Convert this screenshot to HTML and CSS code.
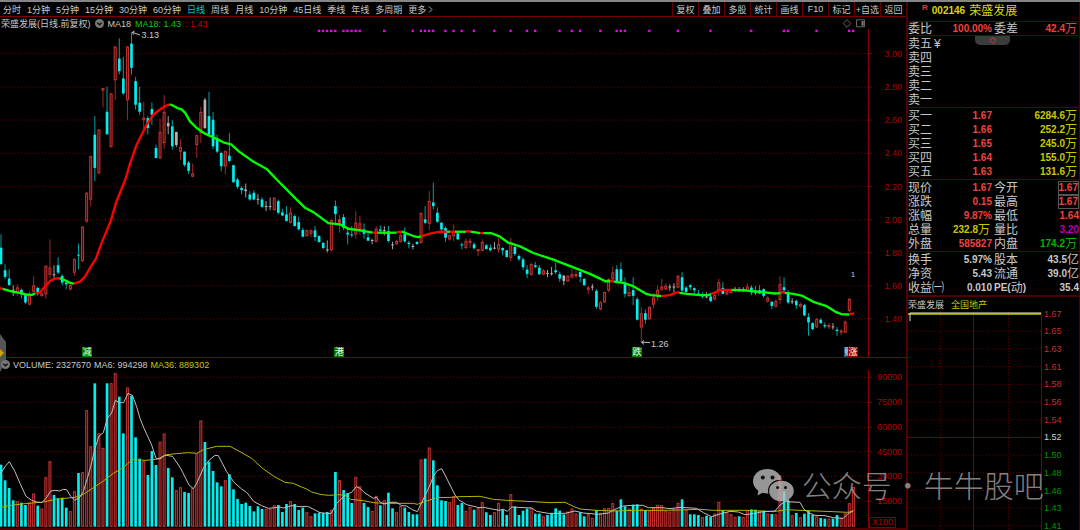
FILE: index.html
```html
<!DOCTYPE html>
<html lang="zh-CN">
<head>
<meta charset="utf-8">
<title>荣盛发展 002146</title>
<link rel="stylesheet" href="styles.css">
</head>
<body>
<div class="app">
  <main class="charts">
    <header class="toolbar">
      <nav class="periods">
        <button>分时</button><button>1分钟</button><button>5分钟</button><button>15分钟</button><button>30分钟</button><button>60分钟</button><button class="active">日线</button><button>周线</button><button>月线</button><button>10分钟</button><button>45日线</button><button>季线</button><button>年线</button><button>多周期</button><button class="more">更多
          <svg width="5" height="7" viewBox="0 0 5 7"><path d="M1 .5 4 3.5 1 6.5"/></svg></button>
      </nav>
      <div class="tools">
        <button>复权</button><button>叠加</button><button>多股</button><button>统计</button><button>画线</button><button>F10</button><button>标记</button><button>+自选</button><button>返回</button>
      </div>
    </header>

    <section class="pane price">
      <div class="caption">
        <span>荣盛发展(日线.前复权)</span>
        <svg class="toggle" width="9" height="9" viewBox="0 0 9 9"><circle cx="4.500" cy="4.500" r="4.500"/><path d="M2.300 3.700 4.500 5.700 6.700 3.700"/></svg>
        <span>MA18</span><span class="green">MA18: 1.43</span><span class="red">: 1.43</span>
        <svg class="corner" width="24" height="9" viewBox="0 0 24 9"><path d="M5 .7 8.800 4.500 5 8.300 1.200 4.500Z"/><path d="M14.500.8h8v7h-8z"/><path class="fill" d="M19.500 2h2.200v4.800h-2.200z"/></svg>
      </div>
      <div class="body">
        <div class="plot">
          <svg id="price" viewBox="0 -453 2604 987" preserveAspectRatio="none"></svg>
          <span class="note high">3.13</span>
          <span class="note low">1.26</span>
          <span class="note one">1</span>
          <span class="badge b1">减</span>
          <span class="badge b2">港</span>
          <span class="badge b3">跌</span>
          <span class="badge blue">财</span>
          <span class="badge crimson">涨</span>
        </div>
        <div class="axis"><svg id="price-axis"></svg></div>
      </div>
    </section>

    <section class="pane volume">
      <div class="caption">
        <svg class="toggle" width="9" height="9" viewBox="0 0 9 9"><circle cx="4.500" cy="4.500" r="4.500"/><path d="M2.300 3.700 4.500 5.700 6.700 3.700"/></svg>
        <span>VOLUME: 2327670</span><span>MA6: 994298</span><span class="yellow">MA36: 889302</span>
      </div>
      <div class="body">
        <div class="plot"><svg id="volume" viewBox="0 45 2604 474" preserveAspectRatio="none"></svg></div>
        <div class="axis"><svg id="volume-axis"></svg><span class="unit">X100</span></div>
      </div>
      <svg class="handle" width="7" height="38" viewBox="0 0 7 38"><path d="M0 0 6 8V28L0 38Z"/><path class="gem" d="M0 15 4 19 0 23Z"/></svg>
    </section>
  </main>

  <aside class="quote">
    <h1 class="name"><sup>R</sup><b>002146</b><span>荣盛发展</span></h1>
    <table class="group first">
      <tr class="pair"><th>委比</th><td class="up"><b>100.00%</b></td><th>委差</th><td class="up inset"><b>42.4</b>万</td></tr>
    </table>
    <table class="group sell">
      <tr><th>卖五<i>¥</i></th></tr><tr><th>卖四</th></tr><tr><th>卖三</th></tr><tr><th>卖二</th></tr><tr><th>卖一</th></tr>
    </table>
    <table class="group">
      <tr class="book"><th>买一</th><td class="up"><b>1.67</b></td><td class="amount"><b>6284.6</b>万</td></tr>
      <tr class="book"><th>买二</th><td class="up"><b>1.66</b></td><td class="amount"><b>252.2</b>万</td></tr>
      <tr class="book"><th>买三</th><td class="up"><b>1.65</b></td><td class="amount"><b>245.0</b>万</td></tr>
      <tr class="book"><th>买四</th><td class="up"><b>1.64</b></td><td class="amount"><b>155.0</b>万</td></tr>
      <tr class="book"><th>买五</th><td class="up"><b>1.63</b></td><td class="amount"><b>131.6</b>万</td></tr>
    </table>
    <table class="group">
      <tr class="pair"><th>现价</th><td class="up"><b>1.67</b></td><th>今开</th><td class="up"><b class="boxed">1.67</b></td></tr>
      <tr class="pair"><th>涨跌</th><td class="up"><b>0.15</b></td><th>最高</th><td class="up"><b class="boxed">1.67</b></td></tr>
      <tr class="pair"><th>涨幅</th><td class="up"><b>9.87%</b></td><th>最低</th><td class="up"><b>1.64</b></td></tr>
      <tr class="pair"><th>总量</th><td class="gold inset"><b>232.8</b>万</td><th>量比</th><td class="magenta"><b>3.20</b></td></tr>
      <tr class="pair"><th>外盘</th><td class="up"><b>585827</b></td><th>内盘</th><td class="down inset"><b>174.2</b>万</td></tr>
    </table>
    <table class="group last">
      <tr class="pair"><th>换手</th><td><b>5.97%</b></td><th>股本</th><td><b>43.5</b>亿</td></tr>
      <tr class="pair"><th>净资</th><td><b>5.43</b></td><th>流通</th><td><b>39.0</b>亿</td></tr>
      <tr class="pair"><th>收益㈠</th><td><b>0.010</b></td><th><b>PE(</b>动<b>)</b></th><td><b>35.4</b></td></tr>
    </table>
    <div class="tabs"><button>荣盛发展</button><button class="gold">全国地产</button></div>
    <div class="mini">
      <svg id="mini" viewBox="0 0 134 218" preserveAspectRatio="none"></svg>
      <svg id="mini-axis"></svg>
    </div>
    <button class="expand" aria-label="展开"><svg width="8" height="7" viewBox="0 0 8 7"><path d="M1 3 4 .8 7 3 M1 3.800 4 6.300 7 3.800"/></svg></button>
  </aside>

  <div class="watermark">
    <svg width="42" height="34" viewBox="0 0 42 34">
      <path d="M14.500 0C6.300 0 0 5.400 0 12.300c0 3.900 2 7.200 5.300 9.500L4.600 26.500l5-2.700c1.600.5 3.200.7 4.900.7h1A10.800 10.800 0 0 1 15 21.600C15 15.400 20.500 10.800 27.500 10.700h1.100C27.300 4.500 21.500 0 14.500 0Z"/>
      <path d="M28.500 11.800c-7 0-12.400 4.300-12.400 10.100s5.400 10.400 12.400 10.400c1.300 0 2.600-.2 3.800-.5l4.500 2.200-.8-4c3-1.900 4.800-4.800 4.800-8.100 0-5.800-5.300-10.100-12.300-10.100Z"/>
      <g class="eyes"><circle cx="9.800" cy="8.500" r="2"/><circle cx="19.500" cy="8.500" r="2"/><circle cx="24.600" cy="18.500" r="1.500"/><circle cx="32.500" cy="18.500" r="1.500"/></g>
    </svg>
    <span>公众号</span><span class="dot">·</span><span>牛牛股吧</span>
  </div>
</div>
<script src="chart.js"></script>
</body>
</html>
```

FILE: styles.css
```css
* { box-sizing: border-box; }
body { margin: 0; background: #000; color: #c8c8c8; font-family: "Liberation Sans", "Noto Sans CJK SC", sans-serif; font-size: 9px; }
button { appearance: none; margin: 0; padding: 0; border: 0; background: none; color: inherit; font: inherit; white-space: nowrap; cursor: pointer; }
svg { display: block; }

.app { position: relative; display: flex; height: 100vh; overflow: hidden; border-top: 2px solid #858585; }
.charts { flex: 1; min-width: 0; display: flex; flex-direction: column; }

.toolbar { display: flex; justify-content: space-between; height: 15px; border-bottom: 1px solid #780000; }
.periods { display: flex; align-items: center; gap: 6px; padding-left: 3px; }
.periods .active { color: #00c8c8; }
.more { display: flex; align-items: center; gap: 2px; }
.more path { fill: none; stroke: #b0b0b0; }
.tools { display: flex; }
.tools button { width: 26px; border-left: 1px solid #640000; text-align: center; }

.pane { position: relative; display: flex; flex-direction: column; min-height: 0; }
.price { flex: 342 1 0; border-bottom: 1px solid #780000; }
.volume { flex: 171 1 0; border-bottom: 2px solid #500000; }
.caption { display: flex; align-items: center; gap: 4px; height: 12px; flex: none; padding: 1px 0 0 1px; line-height: 12px; white-space: nowrap; }
.volume .caption { position: relative; z-index: 1; gap: 3px; }
.toggle circle { fill: #777; }
.toggle path { fill: none; stroke: #111; stroke-width: 1.500px; }
.green { color: #00d000; }
.red { color: #c80000; }
.yellow { color: #c8c800; }
.corner { margin-left: auto; margin-right: 40px; }
.corner path { fill: none; stroke: #666; }
.corner .fill { fill: #777; stroke: none; }

.body { flex: 1; min-height: 0; display: flex; }
.plot { position: relative; flex: 1; min-width: 0; }
.plot svg { position: absolute; width: 100%; height: 100%; }
.axis { position: relative; width: 38px; border-left: 1px solid #8c0000; }
.axis svg { position: absolute; width: 100%; height: 100%; }
.axis text { fill: #b40000; font-size: 9px; text-anchor: end; }
.axis line { stroke: #780000; }
.unit { position: absolute; left: 0; bottom: 0; height: 11px; padding: 0 2px; border: 1px solid #780000; color: #b40000; line-height: 9px; }
.handle { position: absolute; left: 0; top: -24px; }
.handle path { fill: #555; }
.handle .gem { fill: #e09a00; }

.note { position: absolute; line-height: 10px; }
.high { left: 16.300%; top: 1px; }
.low { left: 75%; top: 94.400%; }
.one { left: 98%; top: 73.600%; font-size: 8px; }
.badge { position: absolute; bottom: 0; width: 10px; height: 10px; background: #007800; color: #e8ffe8; line-height: 10px; text-align: center; overflow: hidden; }
.b1 { left: 9.450%; }
.b2 { left: 38.500%; }
.b3 { left: 72.800%; }
.blue { left: 97.200%; background: #1a4c80; }
.crimson { left: 97.700%; background: #8c0000; color: #fff; }

.grid { stroke: #6a0000; stroke-width: 3px; stroke-dasharray: 3 6; }
.up-mark { stroke: #c83232; fill: #3c0a0a; stroke-width: 3px; }
.up-wick { stroke: #a02828; stroke-width: 3px; }
.down-mark { fill: #00f0f0; }
.down-wick { stroke: #00a0a0; stroke-width: 3px; }
.flat-mark { fill: #b4b4b4; }
.flat-wick { stroke: #a0a0a0; stroke-width: 3px; }
.signal { fill: #f000f0; }
.line { fill: none; stroke-width: 3px; stroke-linejoin: round; }
.trend { stroke-width: 7px; }
.rise { stroke: #f00; }
.fall { stroke: #0f0; }
.white { stroke: #bebebe; }
.gold-line { stroke: #b4b400; }

.quote { position: relative; width: 174px; flex: none; display: flex; flex-direction: column; border-left: 2px solid #500000; border-right: 1px solid #500000; font-size: 12px; }
.name { display: flex; align-items: center; gap: 4px; height: 20px; margin: 0; padding: 0 0 2px 14px; border-bottom: 1px solid #500000; color: #d8d800; font-size: 12px; font-weight: 400; line-height: 16px; }
.name b, .quote td b, .quote th b { font-size: 10px; }
.name sup { color: #e04040; font-size: 8px; font-weight: 700; line-height: 8px; align-self: flex-start; padding-top: 2px; }
.group { display: block; padding: 1px 0 0; border-bottom: 1px solid #500000; border-spacing: 0; }
.group tbody { display: block; }
.first { padding: 0; height: 14px; }
.last { border-bottom-width: 2px; }
.group tr { display: grid; height: 14px; align-items: center; line-height: 14px; white-space: nowrap; grid-template-columns: 1fr; }
.group .pair { grid-template-columns: 24px 60px 24px 1fr; }
.group .book { grid-template-columns: 24px 60px 1fr; }
.group th, .group td { display: flex; align-items: center; padding: 0; height: 14px; font-weight: 400; }
.group .pair th:nth-child(3) { padding-left: 2px; }
.group td { justify-content: flex-end; }
.group th i { margin-left: 2px; font-style: normal; }
.group td.inset, .group td.amount { padding-right: 2px; }
.quote .up { color: #f04040; }
.quote .amount, .quote .gold { color: #c8c800; }
.quote .magenta { color: #b400b4; }
.quote .down { color: #00b400; }
.boxed { border: 1px solid #555; line-height: 12px; }
.tabs { display: flex; align-items: center; gap: 7px; height: 15px; font-size: 9px; }
.expand { position: absolute; top: 34px; left: 67px; width: 35px; height: 9px; display: flex; justify-content: center; align-items: center; background: #3c3c3c; border-radius: 0 0 5px 5px; }
.expand path { fill: none; stroke: #e03030; }

.mini { flex: 1; min-height: 0; display: flex; }
#mini { flex: 1; min-width: 0; height: 100%; }
#mini-axis { width: 37px; height: 100%; overflow: visible; }
#mini line { stroke: #780000; }
#mini .dotted { stroke: #640000; stroke-dasharray: 1 2; }
#mini .price-line { stroke: #e0e0e0; }
#mini .average-line { stroke: #909000; stroke-width: 2px; }
#mini-axis text { font-size: 9px; fill: #c03030; }
#mini-axis .even { fill: #d0d0d0; }
#mini-axis .under { fill: #009600; }

.watermark { position: absolute; left: 69.700%; top: 467px; display: flex; align-items: flex-start; color: #a0a0a0; opacity: .8; font-family: "Noto Sans CJK SC", sans-serif; font-size: 30px; font-weight: 300; line-height: 30px; white-space: nowrap; pointer-events: none; }
.watermark svg { margin-right: 7px; fill: #bcbcbc; }
.watermark .eyes { fill: #111; }
.watermark .dot { width: 32px; text-align: center; }
```

FILE: chart.js
```js
// Bars are evenly spaced; a plot unit is a third of a pixel at the default width.
const barX = i => 3 + i * 12.235;

// One entry per day: colour, high, body top, body bottom, low.
const candles = `c 165 205 255 255|c 255 273 293 300|c 270 298 318 318|w 318 332 334 350|r 315 325 340 350|c 328 332 346 358|c 345 348 370 375|r 337 350 376 378|r 291 319 338 340|c 323 326 343 350
r 330 343 350 353|r 258 260 345 358|r 180 265 286 298|w 258 285 287 297|c 234 258 280 285|c 285 290 310 318|c 305 310 315 330|r 315 318 330 334|r 237 240 280 290|c 193 226 229 270
r 140 142 245 248|r 38 40 126 130|r -72 -70 60 80|c -191 -135 -35 5|r -152 -150 -19 -17|r -275 -275 -268 -217|c -279 -204 -136 -136|r -260 -259 -98 -97|r -401 -400 -299 -240|c -425 -364 -326 -316
c -369 -304 -259 -255|r -402 -400 -239 -180|c -443 -409 -336 -316|c -309 -296 -225 -211|c -280 -231 -204 -195|r -234 -186 -179 -142|c -191 -185 -155 -136|c -232 -212 -195 -165|c -105 -95 -65 -63|r -182 -143 -64 -61
r -254 -203 -110 -92|w -191 -170 -160 -136|c -179 -160 -100 -90|w -144 -143 -104 -98|r -122 -98 -84 -60|c -84 -84 -44 -39|c -56 -51 -26 -16|r -48 -18 -9 -7|r -135 -133 -104 -65|r -219 -203 -140 -110
w -245 -240 -155 -152|c -264 -191 -136 -130|c -204 -180 -100 -91|c -135 -125 -84 -80|c -84 -80 -40 -25|r -88 -85 -40 -16|c -140 -72 -56 -52|c -45 -43 8 10|c -5 0 22 28|c 20 25 32 45
w 12 30 35 54|c 35 45 60 64|c 32 40 60 62|w 44 58 60 75|c 53 60 82 85|w 65 80 82 95|w 54 80 82 92|r 54 55 92 93|c 60 65 100 105|c 88 99 108 110
c 80 105 125 126|r 83 100 130 132|c 105 110 140 141|c 112 128 150 153|c 145 152 172 174|r 150 153 170 171|r 150 153 163 173|c 140 153 173 185|c 168 170 188 190|c 188 191 206 210
w 183 210 212 219|r 120 122 212 217|c 63 80 104 130|r 107 120 130 160|c 104 113 145 152|c 145 160 165 195|c 140 165 168 174|r 95 130 165 178|r 110 132 150 166|c 132 150 163 178
c 160 174 184 185|w 178 182 184 195|r 141 148 187 189|c 138 150 154 160|w 140 152 155 168|c 140 155 185 189|w 187 195 197 210|r 182 185 194 197|r 158 168 187 189|c 144 165 186 190
c 184 190 194 207|w 193 200 202 210|c 185 188 194 197|r 98 101 190 194|c 80 120 130 135|r 35 65 133 152|c 9 69 80 90|c 84 100 127 130|c 128 130 150 155|c 141 146 175 187
r 165 168 180 184|r 135 156 170 186|c 158 162 180 182|c 190 195 198 210|r 177 185 206 208|r 177 185 190 206|c 189 195 207 210|r 208 210 215 230|r 180 188 214 216|c 194 198 209 210
c 195 205 213 216|w 188 205 207 210|r 176 195 210 220|c 204 206 213 228|c 212 213 233 235|r 176 190 235 246|c 197 203 224 230|c 225 230 240 244|c 234 240 264 272|c 258 271 284 297
r 250 255 286 290|c 248 258 263 268|c 257 265 285 287|r 270 274 286 288|w 272 281 283 294|w 263 282 284 289|c 250 273 279 285|c 277 285 298 308|w 288 289 305 318|r 288 290 306 308
r 268 285 294 298|r 272 285 287 297|c 277 278 293 308|c 297 299 318 319|r 320 325 331 345|w 314 322 324 334|c 330 335 383 389|r 366 370 390 394|r 337 339 369 371|r 297 300 334 339
r 261 280 300 308|c 258 270 311 312|c 249 270 306 310|c 294 310 344 355|r 318 339 350 354|c 294 333 350 378|c 354 360 422 424|r 385 403 445 490|c 390 402 422 434|r 381 384 420 423
r 342 355 376 388|r 318 332 352 365|r 299 323 331 334|r 312 320 330 333|w 315 322 324 335|w 312 322 324 340|r 288 290 325 328|c 279 294 334 340|c 321 325 338 341|c 315 318 324 333
c 324 327 333 345|c 332 343 346 350|c 339 345 352 358|w 339 352 354 357|c 340 352 366 369|r 344 348 360 364|r 299 309 332 350|c 309 326 344 346|r 333 337 345 348|r 329 334 341 343
w 324 331 333 338|w 324 330 332 338|w 324 330 332 338|r 312 322 334 337|c 318 325 340 348|c 320 334 342 348|c 318 333 343 345|c 327 330 350 356|r 351 356 367 370|c 365 368 380 390
r 360 366 382 385|r 291 315 362 374|c 294 324 333 345|c 333 339 370 374|w 357 366 368 375|c 362 365 378 390|r 370 375 382 386|c 375 378 409 411|c 402 414 430 470|c 429 432 450 453
r 416 420 444 447|c 417 422 432 434|c 430 438 442 448|r 432 438 444 450|w 432 442 444 452|c 444 452 456 470|r 450 455 460 468|r 424 428 460 462|r 356 360 395 399`;

const volumes = `c329 c376 c399 c436 r439 c443 c450 r443 r416 c452 r461 r367 r319 c420 c430 c428 c458 r469 r409 c354 r352 r166 r274 c85 r235 r279 c85 r85 r55 c125
c235 r98 c122 c247 c311 r319 c360 c288 c330 r261 r236 c339 c367 r406 r397 c411 c414 r400 r295 r197 c261 c320 c348 c382 c394 r376 c358 c403 c432 c447
c443 c453 c469 c454 c462 r462 r462 r451 c450 c471 c447 r439 c447 c465 c458 r472 r484 c475 c473 c474 c471 r465 c351 r376 c405 c415 c444 r367 r394 c444
c456 r468 r423 c451 r436 c413 c460 r472 r453 c458 c471 c478 c478 r314 c311 r278 c316 c391 c436 c438 r442 r424 c450 c444 r468 r456 c464 r460 r442 c472
c480 r472 r444 c464 c480 r418 c454 c480 c467 c461 r459 c476 c476 r484 c480 c475 c460 c467 c478 r470 r461 r476 c472 c484 r478 r489 c465 r474 r460 r459
r445 c466 c433 c454 r461 c449 c448 r461 c465 r466 r458 r450 r451 r467 r470 r462 r444 c433 r465 c478 c478 c480 r487 c482 c485 r476 r441 c466 r472 r478
r486 c484 r486 r466 c463 c464 r468 c467 r476 c477 r478 r361 c409 c438 r481 c474 r487 c476 c467 c480 r484 c489 c491 r491 c491 c480 r489 r475 r445 r396`;

// MA18, split wherever its slope changes sign.
const trend = [
  ['rise', '0,327 8,329'],
  ['fall', '8,329 40,338 60,341 78,346 95,347 105,343'],
  ['rise', '105,343 120,340 135,322 152,304 165,298 178,297'],
  ['fall', '178,297 195,303 210,311 222,313'],
  ['rise', '222,313 240,307 255,292 270,266 288,238 305,190 332,125 348,70 376,0 390,-48 410,-105 440,-165 460,-195 480,-211 495,-221 510,-226'],
  ['fall', '510,-226 520,-222 532,-215 545,-211 556,-200 570,-175 590,-155 615,-138 640,-127 670,-112 693,-106 720,-82 760,-54 800,-32 830,0 900,70 915,85 940,98 985,131 1020,135 1045,148 1080,153 1118,160'],
  ['rise', '1118,160 1133,160'], ['fall', '1133,160 1190,160'], ['rise', '1190,158 1205,157'],
  ['fall', '1205,157 1225,164 1240,170 1255,173 1264,171'],
  ['rise', '1264,171 1290,163 1320,157 1340,157'], ['fall', '1340,157 1350,157'], ['rise', '1350,157 1365,157'],
  ['fall', '1365,157 1398,157'], ['rise', '1398,156 1412,156'], ['fall', '1412,157 1440,161'], ['rise', '1440,161 1450,161'],
  ['fall', '1450,161 1473,161 1500,172 1525,190 1560,201 1600,221 1660,241 1730,268 1770,284 1800,298 1815,306 1830,306'],
  ['rise', '1830,306 1842,306'], ['fall', '1842,307 1870,311 1900,321 1920,333 1938,344 1955,348 1985,351'],
  ['rise', '1985,351 2010,348 2025,341 2038,339'], ['fall', '2038,341 2060,344 2100,348 2125,348 2133,345'],
  ['rise', '2133,345 2150,338 2160,332 2195,332'], ['fall', '2195,332 2240,334 2280,338 2325,343 2342,342'],
  ['rise', '2342,339 2355,339'], ['fall', '2355,341 2380,344 2405,349 2440,368 2480,381 2510,400 2525,405 2548,406'],
  ['rise', '2548,405 2563,403']
];

const ma6 = '0,358 15,335 28,320 45,350 60,385 78,424 95,436 110,441 125,443 138,430 152,408 165,406 178,408 190,403 200,404 212,424 224,436 240,426 250,410 262,370 272,335 285,280 297,243 310,233 322,190 335,174 346,136 358,143 371,143 384,115 397,121 410,155 420,190 432,220 455,270 468,310 480,312 495,300 510,303 518,304 542,340 567,390 580,401 590,385 610,340 628,315 645,301 655,302 680,350 702,382 725,402 740,412 762,440 785,452 805,460 825,458 840,456 850,459 875,452 900,455 923,454 945,465 960,473 993,476 1010,445 1040,417 1055,412 1069,395 1080,400 1095,414 1120,430 1130,427 1140,441 1153,447 1170,442 1190,442 1205,452 1220,453 1235,463 1252,470 1275,422 1290,390 1300,364 1312,347 1325,341 1335,360 1350,390 1365,420 1378,436 1400,449 1437,458 1450,457 1497,466 1510,463 1522,469 1535,456 1550,457 1595,459 1610,469 1645,475 1695,475 1725,468 1750,474 1795,478 1825,474 1845,463 1870,453 1900,451 1928,451 1945,458 1985,458 2010,461 2040,457 2090,460 2110,473 2135,485 2160,477 2190,469 2215,471 2235,479 2260,476 2290,470 2325,468 2340,450 2355,440 2400,442 2412,463 2430,475 2445,481 2475,482 2500,488 2530,490 2542,478 2560,466';
const ma36 = '0,458 25,452 75,446 130,441 165,433 225,427 250,418 275,402 310,378 340,355 370,338 397,314 435,316 470,313 500,299 530,296 565,293 590,295 610,284 650,274 690,274 720,290 755,310 790,342 825,366 855,382 880,385 900,394 920,402 935,411 960,418 985,421 1020,419 1040,424 1052,433 1090,437 1120,443 1150,445 1240,445 1252,448 1270,441 1290,435 1310,428 1355,427 1380,425 1440,424 1480,433 1520,436 1600,440 1650,443 1695,442 1720,454 1740,462 1790,466 1850,468 1900,466 2000,466 2100,463 2140,466 2240,466 2320,470 2360,464 2400,466 2500,470 2540,472 2560,470';

const signals = [78, 79, 80, 81, 82, 84, 85, 86, 87, 88, 94, 101, 103, 104, 105, 106, 109, 111, 113, 116, 121, 125, 129, 131, 137, 140, 142, 147, 151, 152, 153, 159, 166, 174, 184, 192, 193, 200, 208, 209];
const kinds = { r: 'up', c: 'down', w: 'flat' };

const line = (cls, x1, y1, x2, y2) => `<line class="${cls}" x1="${x1}" y1="${y1}" x2="${x2}" y2="${y2}"/>`;
const rect = (cls, x, y, w, h) => `<rect class="${cls}" x="${x}" y="${y}" width="${w}" height="${h}"/>`;
const poly = (cls, pts) => `<polyline class="line ${cls}" points="${pts}"/>`;
const body = (kind, x, top, bottom) => kind === 'up'
  ? rect('up-mark', x - 3, top + 1, 6, Math.max(bottom - top - 2, 3))
  : rect(kind + '-mark', x - 4, top, 8, Math.max(bottom - top, 3));
const fill = (id, parts) => { document.getElementById(id).innerHTML = parts.join(''); };

// Price plot
const priceRows = [-379, -278, -179, -79, 21, 121, 220, 320, 419];
fill('price', [
  ...priceRows.map(y => line('grid', 0, y, 2604, y)),
  ...signals.map(i => rect('signal', barX(i) - 4, -451, 7, 7)),
  ...candles.split(/[|\n]/).map((row, i) => {
    const [c, ...v] = row.split(' ');
    const [high, top, bottom, low] = v.map(Number);
    const kind = kinds[c];
    return line(kind + '-wick', barX(i), high, barX(i), low) + body(kind, barX(i), top, bottom);
  }),
  ...trend.map(([cls, pts]) => poly('trend ' + cls, pts)),
  poly('white', '420,-435 397,-443 404,-447'), poly('white', '397,-443 401,-436'),
  poly('white', '1950,490 1925,490 1932,484'), poly('white', '1925,490 1932,496')
]);

// Volume plot
const volumeRows = [67, 142, 217, 290, 364, 439];
fill('volume', [
  ...volumeRows.map(y => line('grid', 0, y, 2604, y)),
  ...volumes.split(/\s+/).map((v, i) => body(kinds[v[0]], barX(i), Number(v.slice(1)), 515)),
  poly('gold-line', ma36),
  poly('white', ma6)
]);

// Value axes: labels sit on the grid rows, short ticks half way between.
function axis(id, rows, labels, start, span) {
  const pct = y => (y - start) / span * 100 + '%';
  fill(id, rows.map((y, i) => {
    const next = i + 1 < rows.length ? (y + rows[i + 1]) / 2 : y;
    return line('', 0, pct(y), 3, pct(y)) + line('', 0, pct(next), 1, pct(next)) +
      `<text x="33" y="${pct(y)}" dy="3">${labels[i]}</text>`;
  }));
}
axis('price-axis', priceRows, ['3.00', '2.80', '2.60', '2.40', '2.20', '2.00', '1.80', '1.60', '1.40'], -453, 987);
axis('volume-axis', volumeRows, ['90000', '75000', '60000', '45000', '30000', '15000'], 45, 474);

// Intraday plot
const levels = ['1.67', '1.65', '1.63', '1.61', '1.58', '1.56', '1.54', '1.52', '1.50', '1.48', '1.46', '1.43', '1.41'];
const levelY = i => 1.5 + i * 17.7;
fill('mini', [
  ...levels.map((_, i) => line(i === 7 ? '' : 'dotted', 0, levelY(i), 134, levelY(i))),
  line('dotted', 32.5, 0, 32.5, 218), line('', 65.5, 0, 65.5, 218), line('dotted', 100.5, 0, 100.5, 218), line('', 133.5, 0, 133.5, 218),
  line('average-line', 0, 2, 133, 2), line('price-line', 2, 1, 133, 1), line('price-line', 2, 1, 2, 9)
]);
fill('mini-axis', levels.map((t, i) =>
  `<text class="${i === 7 ? 'even' : i > 7 ? 'under' : ''}" x="2" y="${levelY(i) / 218 * 100}%" dy="3">${t}</text>`));
```
